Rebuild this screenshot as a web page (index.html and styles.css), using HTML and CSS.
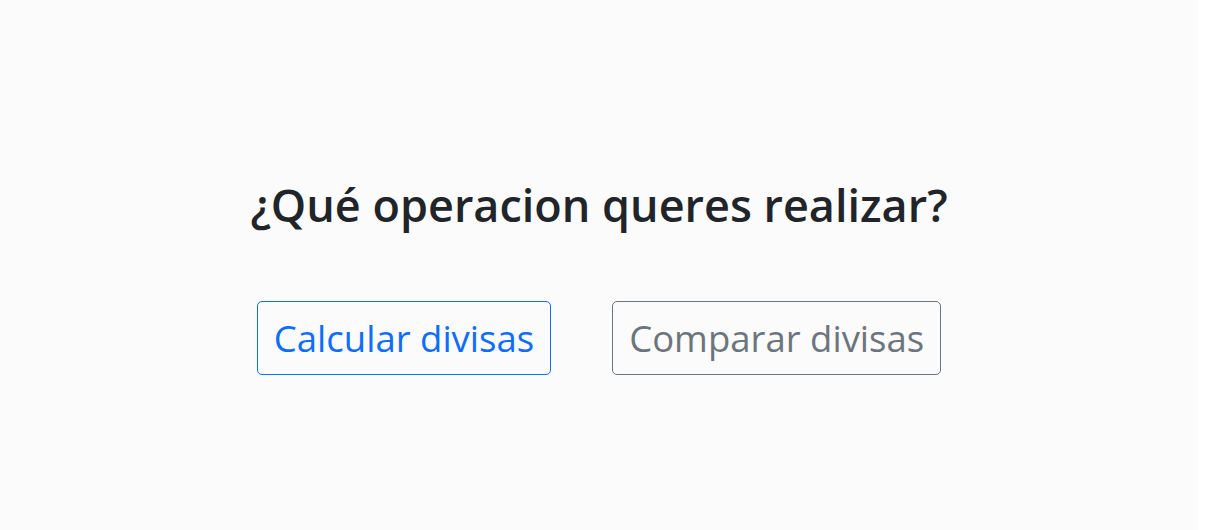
FILE: index.html
```html
<!DOCTYPE html>
<html lang="es">
<head>
<meta charset="utf-8">
<title>Divisas</title>
<link rel="stylesheet" href="styles.css">
</head>
<body>
<main class="page">
  <h1 class="title">¿Qué operacion queres realizar?</h1>
  <div class="actions">
    <button class="btn btn-primary-outline">Calcular divisas</button>
    <button class="btn btn-secondary-outline">Comparar divisas</button>
  </div>
</main>
</body>
</html>
```
FILE: styles.css
```css
* { box-sizing: border-box; }
html, body { margin: 0; padding: 0; background: #ffffff; }
body { font-family: "Open Sans", "Noto Sans", sans-serif; color: #212529; }
.page {
  width: 1198px;
  height: 530px;
  background: #fbfbfb;
  display: flex;
  flex-direction: column;
  align-items: center;
  padding-top: 178px;
}
.title {
  margin: 0;
  font-size: 45px;
  line-height: 54px;
  font-weight: 600;
  color: #212529;
}
.actions {
  display: flex;
  gap: 61px;
  margin-top: 69px;
}
.btn {
  font-family: inherit;
  font-size: 36.5px;
  line-height: 48px;
  padding: 12px 16px;
  background: transparent;
  border: 1px solid;
  border-radius: 5px;
}
.btn-primary-outline { color: #0d6efd; border-color: #0d6efd; }
.btn-secondary-outline { color: #6c757d; border-color: #6c757d; }
```
